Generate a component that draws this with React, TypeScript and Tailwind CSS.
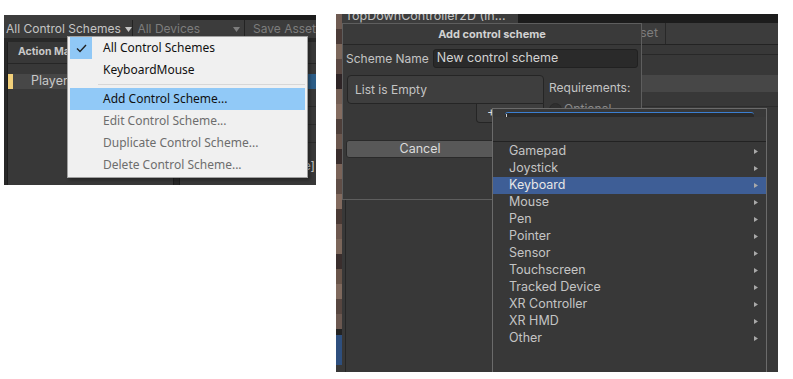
import React from "react";

const schemeItems = [
  { label: "All Control Schemes", checked: true },
  { label: "KeyboardMouse" },
];
const schemeActions = [
  { label: "Add Control Scheme...", active: true },
  { label: "Edit Control Scheme...", disabled: true },
  { label: "Duplicate Control Scheme...", disabled: true },
  { label: "Delete Control Scheme...", disabled: true },
];
const devices = [
  "Gamepad",
  "Joystick",
  "Keyboard",
  "Mouse",
  "Pen",
  "Pointer",
  "Sensor",
  "Touchscreen",
  "Tracked Device",
  "XR Controller",
  "XR HMD",
  "Other",
];
const pixels = [
  "#6f5b52", "#4b3b37", "#7c675b", "#5a4842", "#2e2426", "#735e54", "#846c60",
  "#4e3f3a", "#6a564d", "#392d2c", "#7a6358", "#5f4d46", "#826a5e", "#4a3a35",
  "#6d584f", "#7b665a", "#3a2e2d", "#685449", "#7f695d", "#574640", "#6b5850",
];

const Caret = ({ className }: { className: string }) => (
  <svg width="7" height="5" viewBox="0 0 7 5" className={className}>
    <path d="M0 0h7L3.5 5z" fill="currentColor" />
  </svg>
);

const LeftShot = () => {
  return (
    <div className="relative ml-[4px] mt-[15px] h-[170px] w-[312px] shrink-0 overflow-hidden bg-[#282828] font-['Inter',sans-serif]">
      <div className="flex h-[5px]">
        <div className="w-[176px] bg-[#3c3c3c]" />
        <div className="flex-1 bg-[#1c1c1c]" />
      </div>
      <div className="flex h-[18px] items-center whitespace-nowrap bg-[#3c3c3c] text-[12px] leading-none">
        <div className="flex h-full w-[130px] items-center gap-[4px] border-r border-[#232323] pl-[2px] text-[#c4c4c4]">
          All Control Schemes
          <Caret className="shrink-0 text-[#c4c4c4]" />
        </div>
        <div className="flex h-full w-[112px] items-center justify-between border-r border-[#232323] pl-[4px] pr-[4px] text-[#7d7d7d]">
          All Devices
          <Caret className="shrink-0 text-[#7d7d7d]" />
        </div>
        <div className="pl-[8px] text-[#7d7d7d]">Save Asset</div>
      </div>
      <div className="flex h-[147px] pt-[4px]">
        <div className="ml-[3px] flex w-[167px] flex-col border-x border-[#1e1e1e] bg-[#383838]">
          <div className="flex h-[22px] items-end whitespace-nowrap border-b border-[#262626] pb-[3px] pl-[10px] text-[10.5px] font-bold text-[#c8c8c8]">
            Action Maps
          </div>
          <div className="mt-[10px] flex h-[15px] items-center bg-[#474747]">
            <div className="h-full w-[5px] bg-[#f2d07a]" />
            <span className="pl-[18px] text-[12.5px] text-[#c8c8c8]">Player</span>
          </div>
          <div className="flex-1 bg-[#383838]" />
        </div>
        <div className="ml-[5px] flex flex-1 flex-col border-l border-[#1e1e1e] bg-[#383838]">
          <div className="h-[22px] border-b border-[#262626]" />
          <div className="mt-[10px] h-[15px] bg-[#2c5d87]" />
          <div className="h-[18px] border-b border-[#2b2b2b]" />
          <div className="h-[18px] border-b border-[#2b2b2b]" />
          <div className="h-[18px] border-b border-[#2b2b2b]" />
          <div className="h-[14px]" />
          <div className="flex justify-end pr-[1px] text-[12px] text-[#c4c4c4]">e]</div>
        </div>
      </div>

      <div className="absolute left-[63px] top-[21px] flex w-[241px] flex-col border border-[#a0a0a0] bg-[#f0f0f0] pb-[1px] font-['Noto_Sans',sans-serif] text-[12px] text-[#101010] shadow-[2px_2px_3px_rgba(0,0,0,0.35)]">
        {schemeItems.map((item) => (
          <div key={item.label} className="flex h-[22px] items-center pl-[2px]">
            <div
              className={
                item.checked
                  ? "flex h-[22px] w-[22px] items-center justify-center bg-[#90c8f6]"
                  : "w-[22px]"
              }
            >
              {item.checked && (
                <svg width="11" height="9" viewBox="0 0 11 9">
                  <path d="M1 4.5l3 3L10 1" stroke="#202020" strokeWidth="1.4" fill="none" />
                </svg>
              )}
            </div>
            <span className="pl-[11px]">{item.label}</span>
          </div>
        ))}
        <div className="my-[3px] ml-[30px] mr-[2px] h-px bg-[#d7d7d7]" />
        {schemeActions.map((item) => (
          <div
            key={item.label}
            className={
              item.active
                ? "mx-[2px] flex h-[22px] items-center bg-[#91c9f7] pl-[33px]"
                : "mx-[2px] flex h-[22px] items-center pl-[33px] text-[#6d6d6d]"
            }
          >
            {item.label}
          </div>
        ))}
      </div>
    </div>
  );
};

const RightShot = () => {
  return (
    <div className="relative ml-[20px] mt-[14px] flex h-[358px] w-[442px] shrink-0 overflow-hidden bg-[#383838] font-['Inter',sans-serif]">
      <div className="flex w-[6px] flex-col">
        {pixels.map((c, i) => (
          <div key={i} className="h-[15px]" style={{ backgroundColor: c }} />
        ))}
        <div className="h-[6px] bg-[#232323]" />
        <div className="h-[30px] bg-[#2e4f7e]" />
      </div>
      <div className="flex flex-1 flex-col">
        <div className="flex h-[9px] overflow-hidden">
          <div className="w-[176px] bg-[#3c3c3c] pl-[3px] text-[12.5px] leading-[9px] text-[#c4c4c4]">
            <div className="-mt-[3px] whitespace-nowrap">TopDownController2D (In...</div>
          </div>
          <div className="flex-1 bg-[#1c1c1c]" />
        </div>
        <div className="flex h-[22px] items-center border-b border-[#232323] bg-[#3c3c3c]">
          <div className="w-[298px]" />
          <div className="flex h-full items-center border-r border-[#282828] pr-[7px] text-[12.5px] text-[#7d7d7d]">
            set
          </div>
        </div>
        <div className="h-[10px] border-b border-[#282828]" />
        <div className="h-[20px]" />
        <div className="h-[17px] bg-[#474747]" />
        <div className="h-[15px] border-b border-[#2d2d2d]" />
        <div className="flex flex-1">
          <div className="ml-[3px] w-px bg-[#262626]" />
        </div>
      </div>

      <div className="absolute left-[6px] top-[9px] flex h-[177px] w-[300px] flex-col border border-[#5e5e5e] bg-[#383838] text-[12px] text-[#c4c4c4]">
        <div className="flex h-[21px] items-center justify-center border-b border-[#262626] bg-[#3a3a3a] text-[11px] font-bold text-[#d2d2d2]">
          Add control scheme
        </div>
        <div className="mt-[4px] flex h-[19px] items-center gap-[4px] pl-[3px]">
          <span>Scheme Name</span>
          <div className="mr-[3px] flex h-[19px] flex-1 items-center rounded-[3px] border border-[#212121] bg-[#2a2a2a] pl-[3px] text-[12.5px] text-[#d2d2d2]">
            New control scheme
          </div>
        </div>
        <div className="mt-[7px] flex pl-[4px]">
          <div className="flex w-[197px] flex-col">
            <div className="flex h-[29px] items-center rounded-t-[4px] rounded-bl-[4px] border border-[#252525] bg-[#3e3e3e] pl-[7px]">
              List is Empty
            </div>
            <div className="ml-[129px] flex h-[19px] items-start rounded-b-[4px] border border-t-0 border-[#252525] bg-[#3e3e3e] pl-[10px] text-[13px] leading-[14px] text-[#dcdcdc]">
              +
            </div>
          </div>
          <div className="pl-[5px] pt-[4px]">
            <div>Requirements:</div>
            <div className="mt-[3px] flex items-center gap-[2px] text-[#8a8a8a]">
              <div className="h-[13px] w-[13px] rounded-full border border-[#2a2a2a] bg-[#2f2f2f]" />
              Optional
            </div>
          </div>
        </div>
        <div className="ml-[3px] mt-[17px] flex h-[18px] w-[292px] items-center justify-center rounded-[3px] border border-[#2a2a2a] bg-[#585858] pr-[144px] text-[12.5px] text-[#dcdcdc]">
          Cancel
        </div>
      </div>

      <div className="absolute left-[156px] top-[94px] flex h-[270px] w-[275px] flex-col border border-[#6b6b6b] bg-[#383838] text-[12.5px] text-[#c4c4c4]">
        <div className="mx-[12px] mt-[3px] h-[5px] rounded-t-[3px] border-t border-[#3b7fd1] bg-[#2a2a2a]">
          <div className="ml-px mt-[1px] h-[4px] w-px bg-[#d0d0d0]" />
        </div>
        <div className="h-[25px] border-b border-[#222222] bg-[#3a3a3a]" />
        <div className="mt-[1px] flex flex-col">
          {devices.map((d) => (
            <div
              key={d}
              className={
                d === "Keyboard"
                  ? "flex h-[17px] items-center justify-between bg-[#3e5e96] pl-[16px] pr-[8px] text-[#e6e6e6]"
                  : "flex h-[17px] items-center justify-between pl-[16px] pr-[8px]"
              }
            >
              {d}
              <svg width="4" height="5" viewBox="0 0 4 5">
                <path d="M0 0l4 2.5L0 5z" fill="#a9a9a9" />
              </svg>
            </div>
          ))}
        </div>
      </div>
    </div>
  );
};

export default function App() {
  return (
    <div className="flex h-[379px] w-[793px] items-start overflow-hidden bg-white">
      <LeftShot />
      <RightShot />
    </div>
  );
}
